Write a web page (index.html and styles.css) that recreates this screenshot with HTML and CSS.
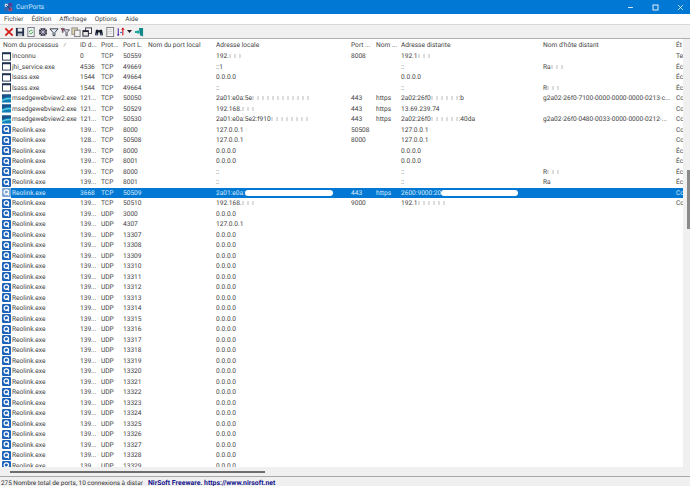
FILE: index.html
```html
<!DOCTYPE html>
<html lang="fr">
<head>
<meta charset="utf-8">
<title>CurrPorts</title>
<link rel="stylesheet" href="styles.css">
</head>
<body>
<svg class="defs" width="0" height="0" aria-hidden="true">
  <symbol id="i-win" viewBox="0 0 10 9"><rect x=".5" y=".5" width="9" height="8" fill="#fff" stroke="#1c2f4e"/><rect x="0" y="0" width="10" height="2" fill="#1c2f4e"/></symbol>
  <symbol id="i-edge" viewBox="0 0 10 9"><rect width="10" height="9" fill="#0f7fb5"/><path d="M0 0h10v2.500C6 2 3 3.500 0 5z" fill="#1b4f86"/><path d="M0 6c3-2 6-2.500 10-2v1.500C6 5 3 6 0 7.500z" fill="#5fd0e8"/></symbol>
  <symbol id="i-reo" viewBox="0 0 10 10"><rect width="10" height="10" rx="1.500" fill="#1b62b8"/><circle cx="4.800" cy="4.500" r="2.500" fill="none" stroke="#fff" stroke-width="1.300"/><path d="M5.200 5.500l2.500 2.500" stroke="#fff" stroke-width="1.400"/></symbol>
</svg>

<div class="window">
  <header class="titlebar">
    <svg class="app-icon" viewBox="0 0 12 12"><rect x="1" y="1" width="4" height="4" fill="#d8d8e8"/><rect x="6" y="0" width="5" height="5" fill="#5b3f8f"/><rect x="0" y="6" width="5" height="5" fill="#3a66b0"/><rect x="6" y="6" width="5" height="5" fill="#b04a70"/><path d="M3 3l6 6" stroke="#1a1a3a"/></svg>
    <span class="app-name">CurrPorts</span>
    <span class="win-btns">
      <svg viewBox="0 0 7 7"><path d="M1 3.500h5" stroke="#cfe3f6"/></svg>
      <svg viewBox="0 0 7 7"><rect x="1" y="1" width="5" height="5" fill="none" stroke="#e6f1fb"/></svg>
      <svg viewBox="0 0 7 7"><path d="M1 1l5 5M6 1l-5 5" stroke="#e6f1fb" stroke-width=".8"/></svg>
    </span>
  </header>

  <nav class="menubar">
    <span>Fichier</span><span>Édition</span><span>Affichage</span><span>Options</span><span>Aide</span>
  </nav>

  <div class="toolbar">
    <svg viewBox="0 0 11 11"><path d="M1.500 1.500l8 8M9.500 1.500l-8 8" stroke="#d0201c" stroke-width="2"/></svg>
    <svg viewBox="0 0 11 11"><rect x="1" y="1" width="9" height="9" fill="#26304a"/><rect x="3" y="1.500" width="5" height="3.500" fill="#e8edf0"/><rect x="3" y="7" width="5" height="3" fill="#b8c0c8"/></svg>
    <svg viewBox="0 0 11 11"><rect x="2" y=".5" width="7" height="10" fill="#f2f4f0" stroke="#778"/><path d="M3.800 5.500a2 2 0 0 1 3.400-1.300M7.200 5.500a2 2 0 0 1-3.400 1.300" fill="none" stroke="#1f9a3c" stroke-width="1"/></svg>
    <svg viewBox="0 0 11 11"><circle cx="5.500" cy="5.500" r="4.500" fill="#2a2a3a"/><path d="M5.500 1v9M1 5.500h9M2.300 2.300l6.400 6.400M8.700 2.300l-6.400 6.400" stroke="#dde" stroke-width=".8"/></svg>
    <svg viewBox="0 0 11 11"><path d="M1 2h9L6.500 6v3.500h-2V6z" fill="#e8eef2" stroke="#2a3344"/></svg>
    <svg viewBox="0 0 11 11"><path d="M1 1.500h4L3.500 4v2H2.500V4z" fill="#a04060" stroke="#444" stroke-width=".5"/><path d="M4 3h6.500L8 6v3.500H6.500V6z" fill="#d8dce0" stroke="#3a3a50" stroke-width=".8"/></svg>
    <svg viewBox="0 0 11 11"><rect x="1" y="1" width="6" height="7" fill="#e6d9b0" stroke="#888"/><rect x="4" y="3.500" width="6" height="7" fill="#f2f2f2" stroke="#777"/></svg>
    <svg viewBox="0 0 11 11"><rect x="4" y="1" width="6.500" height="6" fill="#fff" stroke="#334"/><rect x="1" y="4" width="6" height="6" fill="#e8e8e8" stroke="#223"/><rect x="1" y="4" width="6" height="1.500" fill="#223"/></svg>
    <svg viewBox="0 0 11 11"><path d="M1 9l1.200-6h2.300v6zM10 9L8.800 3H6.500v6z" fill="#141a2a"/><rect x="4" y="3.500" width="3" height="2.500" fill="#141a2a"/><circle cx="2.800" cy="8" r="1.200" fill="#5a6a88"/><circle cx="8.200" cy="8" r="1.200" fill="#5a6a88"/></svg>
    <svg viewBox="0 0 11 11"><rect x="2" y=".5" width="7.500" height="10" fill="#f6f6f6" stroke="#777"/><path d="M3.500 3h4.500M3.500 5h4.500M3.500 7h4.500" stroke="#bbb" stroke-width=".7"/></svg>
    <svg class="sort" viewBox="0 0 11 11"><path d="M2.500 1.500v8" stroke="#5030a0" stroke-width="1.200"/><path d="M1 8l1.500 2L4 8z" fill="#5030a0"/><path d="M7.500 1v8" stroke="#d01c2c" stroke-width="1.300"/><path d="M5.500 3l2-2.500 2 2.500z" fill="#d01c2c"/><path d="M4.500 6h2" stroke="#1b5cc0"/></svg>
    <svg class="caret" viewBox="0 0 5 3"><path d="M0 0h5L2.500 3z" fill="#223"/></svg>
    <svg viewBox="0 0 11 11"><path d="M5.500 1h4.500v9.500L6.500 9z" fill="#14878a"/><path d="M1 4.500h3V3l3 2.500L4 8V6.500H1z" fill="#1ba6a0"/></svg>
  </div>

  <div class="list-area">
    <div class="list-main">
      <div class="cols head">
        <span>Nom du processus<i class="sort-mark">⁄</i></span><span>ID d...</span><span>Prot...</span><span>Port L.</span><span>Nom du port local</span><span>Adresse locale</span><span>Port ...</span><span>Nom ...</span><span>Adresse distante</span><span>Nom d'hôte distant</span><span>Ét</span>
      </div>
      <div class="rows">
        <div class="cols"><span class="proc"><svg><use href="#i-win"/></svg>Inconnu</span><span>0</span><span>TCP</span><span>50559</span><span></span><span>192.<b class="blot w12"></b></span><span>8008</span><span></span><span>192.1<b class="blot w12"></b></span><span></span><span>Te</span></div>
        <div class="cols"><span class="proc"><svg><use href="#i-win"/></svg>jhi_service.exe</span><span>4536</span><span>TCP</span><span>49669</span><span></span><span>::1</span><span></span><span></span><span>::</span><span>Ra<b class="blot w12"></b></span><span>Éc</span></div>
        <div class="cols"><span class="proc"><svg><use href="#i-win"/></svg>lsass.exe</span><span>1544</span><span>TCP</span><span>49664</span><span></span><span>0.0.0.0</span><span></span><span></span><span>0.0.0.0</span><span></span><span>Éc</span></div>
        <div class="cols"><span class="proc"><svg><use href="#i-win"/></svg>lsass.exe</span><span>1544</span><span>TCP</span><span>49664</span><span></span><span>::</span><span></span><span></span><span>::</span><span>R<b class="blot w12"></b></span><span>Éc</span></div>
        <div class="cols"><span class="proc"><svg><use href="#i-edge"/></svg>msedgewebview2.exe</span><span>121...</span><span>TCP</span><span>50050</span><span></span><span>2a01:e0a:5e<b class="blot w70"></b></span><span>443</span><span>https</span><span>2a02:26f0<b class="blot w28"></b>:b</span><span>g2a02-26f0-7100-0000-0000-0000-0213-c...</span><span>Cc</span></div>
        <div class="cols"><span class="proc"><svg><use href="#i-edge"/></svg>msedgewebview2.exe</span><span>121...</span><span>TCP</span><span>50529</span><span></span><span>192.168.<b class="blot w12"></b></span><span>443</span><span>https</span><span>13.69.239.74</span><span></span><span>Cc</span></div>
        <div class="cols"><span class="proc"><svg><use href="#i-edge"/></svg>msedgewebview2.exe</span><span>121...</span><span>TCP</span><span>50530</span><span></span><span>2a01:e0a:5e2:f910<b class="blot w40"></b></span><span>443</span><span>https</span><span>2a02:26f0<b class="blot w28"></b>:40da</span><span>g2a02-26f0-0480-0033-0000-0000-0212-...</span><span>Cc</span></div>
        <div class="cols"><span class="proc"><svg><use href="#i-reo"/></svg>Reolink.exe</span><span>139...</span><span>TCP</span><span>8000</span><span></span><span>127.0.0.1</span><span>50508</span><span></span><span>127.0.0.1</span><span></span><span>Cc</span></div>
        <div class="cols"><span class="proc"><svg><use href="#i-reo"/></svg>Reolink.exe</span><span>128...</span><span>TCP</span><span>50508</span><span></span><span>127.0.0.1</span><span>8000</span><span></span><span>127.0.0.1</span><span></span><span>Cc</span></div>
        <div class="cols"><span class="proc"><svg><use href="#i-reo"/></svg>Reolink.exe</span><span>139...</span><span>TCP</span><span>8000</span><span></span><span>0.0.0.0</span><span></span><span></span><span>0.0.0.0</span><span></span><span>Éc</span></div>
        <div class="cols"><span class="proc"><svg><use href="#i-reo"/></svg>Reolink.exe</span><span>139...</span><span>TCP</span><span>8001</span><span></span><span>0.0.0.0</span><span></span><span></span><span>0.0.0.0</span><span></span><span>Éc</span></div>
        <div class="cols"><span class="proc"><svg><use href="#i-reo"/></svg>Reolink.exe</span><span>139...</span><span>TCP</span><span>8000</span><span></span><span>::</span><span></span><span></span><span>::</span><span>R<b class="blot w12"></b></span><span>Éc</span></div>
        <div class="cols"><span class="proc"><svg><use href="#i-reo"/></svg>Reolink.exe</span><span>139...</span><span>TCP</span><span>8001</span><span></span><span>::</span><span></span><span></span><span>::</span><span>Ra</span><span>Éc</span></div>
        <div class="cols selected"><span class="proc"><svg class="dim"><use href="#i-reo"/></svg><em>Reolink.exe</em></span><span>3668</span><span>TCP</span><span>50509</span><span></span><span>2a01:e0a:<b class="smear w84"></b></span><span>443</span><span>https</span><span>2600:9000:20<b class="smear w60"></b></span><span></span><span>Cc</span></div>
        <div class="cols"><span class="proc"><svg><use href="#i-reo"/></svg>Reolink.exe</span><span>139...</span><span>TCP</span><span>50510</span><span></span><span>192.168.<b class="blot w12"></b></span><span>9000</span><span></span><span>192.1<b class="blot w28"></b></span><span></span><span>Cc</span></div>
        <div class="cols"><span class="proc"><svg><use href="#i-reo"/></svg>Reolink.exe</span><span>139...</span><span>UDP</span><span>3000</span><span></span><span>0.0.0.0</span></div>
        <div class="cols"><span class="proc"><svg><use href="#i-reo"/></svg>Reolink.exe</span><span>139...</span><span>UDP</span><span>4307</span><span></span><span>127.0.0.1</span></div>
        <div class="cols"><span class="proc"><svg><use href="#i-reo"/></svg>Reolink.exe</span><span>139...</span><span>UDP</span><span>13307</span><span></span><span>0.0.0.0</span></div>
        <div class="cols"><span class="proc"><svg><use href="#i-reo"/></svg>Reolink.exe</span><span>139...</span><span>UDP</span><span>13308</span><span></span><span>0.0.0.0</span></div>
        <div class="cols"><span class="proc"><svg><use href="#i-reo"/></svg>Reolink.exe</span><span>139...</span><span>UDP</span><span>13309</span><span></span><span>0.0.0.0</span></div>
        <div class="cols"><span class="proc"><svg><use href="#i-reo"/></svg>Reolink.exe</span><span>139...</span><span>UDP</span><span>13310</span><span></span><span>0.0.0.0</span></div>
        <div class="cols"><span class="proc"><svg><use href="#i-reo"/></svg>Reolink.exe</span><span>139...</span><span>UDP</span><span>13311</span><span></span><span>0.0.0.0</span></div>
        <div class="cols"><span class="proc"><svg><use href="#i-reo"/></svg>Reolink.exe</span><span>139...</span><span>UDP</span><span>13312</span><span></span><span>0.0.0.0</span></div>
        <div class="cols"><span class="proc"><svg><use href="#i-reo"/></svg>Reolink.exe</span><span>139...</span><span>UDP</span><span>13313</span><span></span><span>0.0.0.0</span></div>
        <div class="cols"><span class="proc"><svg><use href="#i-reo"/></svg>Reolink.exe</span><span>139...</span><span>UDP</span><span>13314</span><span></span><span>0.0.0.0</span></div>
        <div class="cols"><span class="proc"><svg><use href="#i-reo"/></svg>Reolink.exe</span><span>139...</span><span>UDP</span><span>13315</span><span></span><span>0.0.0.0</span></div>
        <div class="cols"><span class="proc"><svg><use href="#i-reo"/></svg>Reolink.exe</span><span>139...</span><span>UDP</span><span>13316</span><span></span><span>0.0.0.0</span></div>
        <div class="cols"><span class="proc"><svg><use href="#i-reo"/></svg>Reolink.exe</span><span>139...</span><span>UDP</span><span>13317</span><span></span><span>0.0.0.0</span></div>
        <div class="cols"><span class="proc"><svg><use href="#i-reo"/></svg>Reolink.exe</span><span>139...</span><span>UDP</span><span>13318</span><span></span><span>0.0.0.0</span></div>
        <div class="cols"><span class="proc"><svg><use href="#i-reo"/></svg>Reolink.exe</span><span>139...</span><span>UDP</span><span>13319</span><span></span><span>0.0.0.0</span></div>
        <div class="cols"><span class="proc"><svg><use href="#i-reo"/></svg>Reolink.exe</span><span>139...</span><span>UDP</span><span>13320</span><span></span><span>0.0.0.0</span></div>
        <div class="cols"><span class="proc"><svg><use href="#i-reo"/></svg>Reolink.exe</span><span>139...</span><span>UDP</span><span>13321</span><span></span><span>0.0.0.0</span></div>
        <div class="cols"><span class="proc"><svg><use href="#i-reo"/></svg>Reolink.exe</span><span>139...</span><span>UDP</span><span>13322</span><span></span><span>0.0.0.0</span></div>
        <div class="cols"><span class="proc"><svg><use href="#i-reo"/></svg>Reolink.exe</span><span>139...</span><span>UDP</span><span>13323</span><span></span><span>0.0.0.0</span></div>
        <div class="cols"><span class="proc"><svg><use href="#i-reo"/></svg>Reolink.exe</span><span>139...</span><span>UDP</span><span>13324</span><span></span><span>0.0.0.0</span></div>
        <div class="cols"><span class="proc"><svg><use href="#i-reo"/></svg>Reolink.exe</span><span>139...</span><span>UDP</span><span>13325</span><span></span><span>0.0.0.0</span></div>
        <div class="cols"><span class="proc"><svg><use href="#i-reo"/></svg>Reolink.exe</span><span>139...</span><span>UDP</span><span>13326</span><span></span><span>0.0.0.0</span></div>
        <div class="cols"><span class="proc"><svg><use href="#i-reo"/></svg>Reolink.exe</span><span>139...</span><span>UDP</span><span>13327</span><span></span><span>0.0.0.0</span></div>
        <div class="cols"><span class="proc"><svg><use href="#i-reo"/></svg>Reolink.exe</span><span>139...</span><span>UDP</span><span>13328</span><span></span><span>0.0.0.0</span></div>
        <div class="cols"><span class="proc"><svg><use href="#i-reo"/></svg>Reolink.exe</span><span>139...</span><span>UDP</span><span>13329</span><span></span><span>0.0.0.0</span></div>
      </div>
      <div class="hscroll"><div class="hthumb"></div></div>
    </div>
    <div class="vscroll"><div class="vthumb"></div></div>
  </div>

  <footer class="statusbar">
    <span class="status-left">275 Nombre total de ports, 10 connexions à distar</span>
    <span class="status-link">NirSoft Freeware. https://www.nirsoft.net</span>
  </footer>
</div>
</body>
</html>
```

FILE: styles.css
```css
* { box-sizing: border-box; }
html, body { margin: 0; height: 100%; }
body { font-family: Roboto, "Open Sans", "Liberation Sans", sans-serif; font-size: 6.600px; color: #444; background: #fff; overflow: hidden; text-rendering: geometricPrecision; }
.defs { position: absolute; }

.window { width: 690px; height: 486px; display: flex; flex-direction: column; }

.titlebar { height: 14px; flex: none; background: #0078d4; color: #dcebf8; display: flex; align-items: center; padding-left: 4px; font-size: 6.600px; }
.app-icon { width: 9px; height: 9px; margin-right: 3px; }
.win-btns { margin-left: auto; display: flex; gap: 18px; padding-right: 6px; }
.win-btns svg { width: 7px; height: 7px; }

.menubar { height: 11px; flex: none; display: flex; align-items: center; padding-left: 4px; gap: 8px; font-size: 6.500px; color: #444; border-bottom: 1px solid #d8d8d8; }

.toolbar { height: 14px; flex: none; background: #f0f0f0; border-bottom: 1px solid #b0b0b0; display: flex; align-items: center; padding-left: 4px; gap: 1.200px; }
.toolbar svg { width: 10px; height: 10px; flex: none; }
.toolbar .caret { width: 5px; height: 3px; margin-right: 1px; }

.list-area { flex: 1; min-height: 0; display: flex; }
.list-main { flex: 1; min-width: 0; display: flex; flex-direction: column; }

.cols { display: grid; grid-template-columns: 77px 21px 22px 25px 68px 135px 25px 25px 142px 133px 10px; height: 10.500px; line-height: 10.500px; white-space: nowrap; }
.cols > span { padding-left: 3px; overflow: hidden; }
.head { height: 12px; line-height: 12px; flex: none; }
.sort-mark { font-style: normal; margin-left: 5px; color: #777; }

.rows { flex: 1; min-height: 0; overflow: hidden; }
.proc { display: flex; align-items: center; }
.cols > .proc { padding-left: 2px; }
.proc svg { width: 9px; height: 9px; margin-right: 1px; flex: none; }
.proc svg.dim { opacity: .55; }
.proc em { font-style: normal; }

.selected { background: linear-gradient(90deg, #fff 11px, #0078d4 11px); color: #dcebf8; }
.blot { display: inline-block; height: 4px; background: repeating-linear-gradient(90deg, #ddd 0 2px, #fff 2px 5px); vertical-align: middle; }
.smear { display: inline-block; height: 6px; background: #fff; border-radius: 3px; vertical-align: middle; }
.w12 { width: 12px; }
.w28 { width: 28px; }
.w40 { width: 40px; }
.w60 { width: 77px; }
.w70 { width: 60px; }
.w84 { width: 88px; }

.hscroll { height: 9px; flex: none; background: #f0f0f0; display: flex; align-items: center; padding-left: 10px; }
.hthumb { width: 255px; height: 2px; background: #6e6e6e; }
.vscroll { width: 7px; flex: none; background: #f0f0f0; padding: 131px 0 0 3.500px; }
.vthumb { width: 3px; height: 59px; background: #8a8a8a; }

.statusbar { height: 10px; flex: none; border-top: 1px solid #a8a8a8; background: #f0f0f0; display: flex; align-items: flex-start; padding-top: 2px; line-height: 8px; overflow: hidden; font-size: 6.400px; }
.status-left { width: 145px; overflow: hidden; white-space: nowrap; color: #333; margin-left: 1px; }
.status-link { margin-left: 2px; font-size: 6.900px; font-weight: 700; color: #14148c; white-space: nowrap; }
```
